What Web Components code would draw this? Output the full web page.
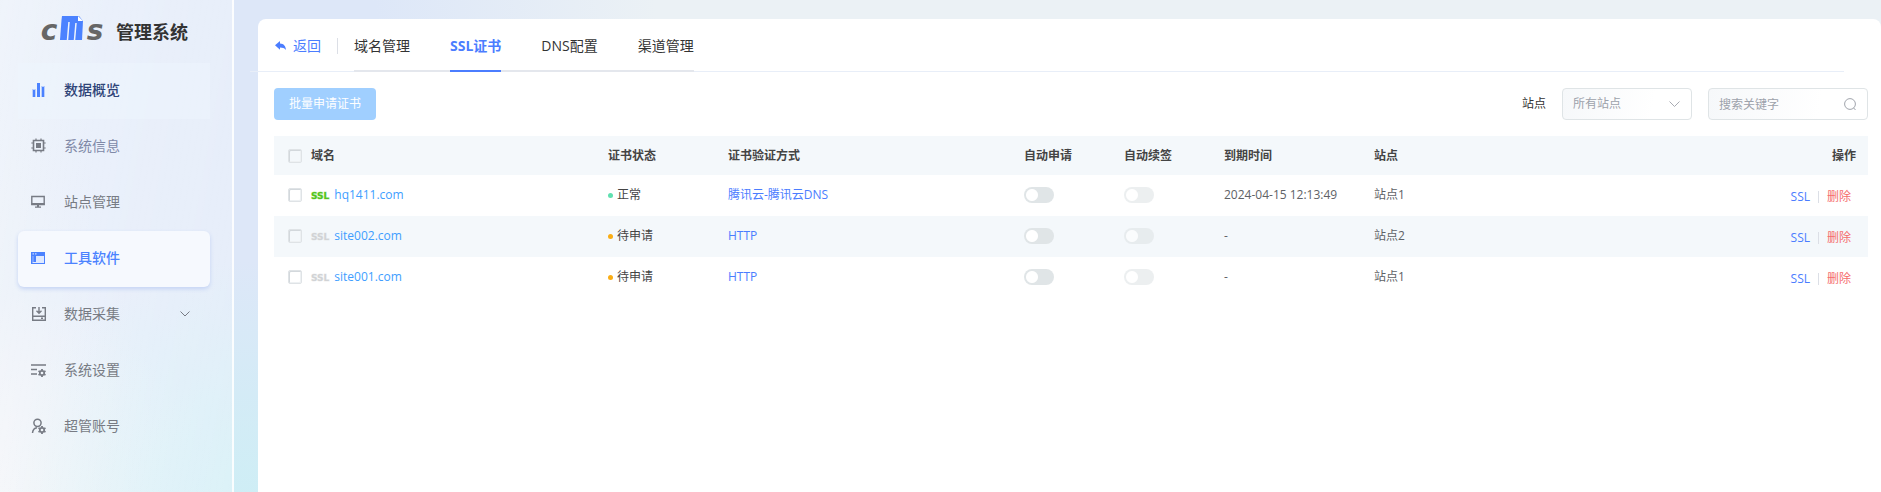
<!DOCTYPE html>
<html lang="zh-CN">
<head>
<meta charset="utf-8">
<title>CMS 管理系统 - SSL证书</title>
<style>
html { height: 100%; }
body {
  margin: 0; min-height: 100%; display: flex;
  font: 12px/20px "Open Sans", "Noto Sans CJK SC", sans-serif; color: #333;
  background:
    radial-gradient(circle 260px at 250px 520px, #cdeef5 0, #cdeef5aa 40%, #cdeef500 100%),
    radial-gradient(circle 200px at 0 492px, #f0f1f6 0, #f0f1f600 100%),
    radial-gradient(ellipse 420px 800px at 240px 120px, #dde7f8 0, #dde7f8 35%, #dde7f800 100%),
    #ebf1f5;
}
</style>
</head>
<body>
<cms-sidebar>
  <cms-menu-item icon="chart" tone="dark">数据概览</cms-menu-item>
  <cms-menu-item icon="chip" tone="soft">系统信息</cms-menu-item>
  <cms-menu-item icon="monitor">站点管理</cms-menu-item>
  <cms-menu-item icon="window" tone="active">工具软件</cms-menu-item>
  <cms-menu-item icon="collect" expandable>数据采集</cms-menu-item>
  <cms-menu-item icon="settings">系统设置</cms-menu-item>
  <cms-menu-item icon="admin">超管账号</cms-menu-item>
</cms-sidebar>
<cms-card>
  <cms-tabs slot="head">
    <cms-tab>域名管理</cms-tab>
    <cms-tab active>SSL证书</cms-tab>
    <cms-tab>DNS配置</cms-tab>
    <cms-tab>渠道管理</cms-tab>
  </cms-tabs>
  <cms-toolbar></cms-toolbar>
  <cms-cert-table></cms-cert-table>
</cms-card>

<script>
const define = (name, html, setup) => customElements.define(name, class extends HTMLElement {
  constructor() {
    super();
    this.attachShadow({ mode: 'open' });
  }
  connectedCallback() {
    this.shadowRoot.innerHTML = typeof html === 'function' ? html(this) : html;
    if (setup) setup(this);
  }
});

const gear = (x, y) => `<g transform="translate(${x} ${y})" fill="none" stroke="currentColor"><circle r="2.2" stroke-width="1.7"/><path d="M0-2.6V-4M0 2.6V4M2.2-1.3 3.5-2M-2.2-1.3-3.5-2M2.2 1.3 3.5 2M-2.2 1.3-3.5 2" stroke-width="1.8"/></g>`;
const icons = {
  chart: `<path fill="#b9cffc" d="M1 7h4v8H1zM10 4h4v11h-4z"/><path d="M2 8h2v7H2zM6 1h3v14H6zM11 5h2v10h-2z" fill="currentColor"/>`,
  chip: `<path fill="none" stroke="currentColor" stroke-width="1.6" d="M2.500 2.500h10v10h-10z"/><path fill="currentColor" d="M5 5h5v5H5z"/><path stroke="currentColor" stroke-width="1.200" d="M5 .5V2M10 .5V2M5 13v1.500M10 13v1.500M.3 5H2M.3 10H2M13 5h1.700M13 10h1.700"/>`,
  monitor: `<path fill="none" stroke="currentColor" stroke-width="1.400" d="M.8 2.500h12.400v8H.8z"/><path fill="currentColor" d="M.5 9h13v2H.5zM6 11h2v2H6zM4 12.500h6v1.200H4z"/>`,
  window: `<path fill="currentColor" d="M0 2h14v12H0z"/><path fill="#dfe9ff" d="M5 6h8v7H1.500v-1H5z"/><path fill="#9dbbff" d="M1.500 6h1v6h-1z"/><path fill="#c9daff" d="M1.500 3.200H3v1.200H1.500zM4 3.200h1.500v1.200H4z"/>`,
  collect: `<path fill="none" stroke="currentColor" stroke-width="1.400" d="M5 1.700H1.700v12.600h12.600V1.700H11M1.700 10.300h12.600M8 1v6M5.500 4.800 8 7.200l2.500-2.400M10 12.300h2"/>`,
  settings: `<path stroke="currentColor" stroke-width="1.600" d="M0 3h15M0 7.500h6M0 12h6"/>${gear(11, 11)}`,
  admin: `<g fill="none" stroke="currentColor" stroke-width="1.500"><circle cx="6.500" cy="4.800" r="3.600"/><path d="M1.500 15c.3-3 1.800-5 4.500-5.300"/></g>${gear(11, 12)}`
};

define('cms-logo', `
<style>
:host { display: flex; align-items: center; justify-content: center; height: 63px; padding-right: 4px; gap: 12px; }
.mark { display: flex; align-items: flex-end; height: 24px; margin-bottom: 7px;
  font: italic bold 28px/14px "DejaVu Sans", sans-serif; color: #666; }
.mark span { height: 14px; display: flex; align-items: center; padding-bottom: 5px; box-sizing: border-box; width: 18px; justify-content: center; }
svg { display: block; margin: 0 2px; }
b { font-size: 18px; line-height: 26px; }
</style>
<div class="mark"><span>c</span><svg width="24" height="24" viewBox="0 0 24 24" aria-hidden="true"><path fill="#4b82ff" d="M2 0h17l4 5-1 19H0L1.500 4z"/><path fill="#fff" d="M18 0v5h5z"/><path stroke="#edf3fd" stroke-width="1.500" d="M9 6 7.500 24M16 7l-1.500 17"/></svg><span>s</span></div>
<b>管理系统</b>`);

define('cms-sidebar', `
<style>
:host { display: block; flex: 0 0 232px; border-right: 2px solid #fffc; background: linear-gradient(100deg, #ffffff75, #ffffff42); }
nav { margin: 0 22px 0 18px; }
</style>
<cms-logo></cms-logo><nav aria-label="主菜单"><slot></slot></nav>`);

define('cms-menu-item', el => `
<style>
:host { display: block; color: #777b84; }
:host([tone=dark]) { color: #2f4478; background: #edf5fe80; }
:host([tone=soft]) { color: #8089a8; }
:host([tone=active]) { color: #4b82ff; background: #f6f9fe; border-radius: 6px; box-shadow: 0 2px 4px #c4d3f4; }
a { display: flex; align-items: center; height: 56px; padding: 0 20px 2px 13px; box-sizing: border-box; color: inherit; text-decoration: none; font-size: 14px; }
:host([tone=dark]) a, :host([tone=active]) a { font-weight: 500; }
.icon { width: 16px; height: 16px; margin-right: 17px; }
:host([tone=dark]) .icon { color: #4b82ff; }
:host([tone=soft]) .icon { color: #777b84; }
.text { flex: 1; }
</style>
<a href="#"><svg class="icon" viewBox="0 0 16 16" aria-hidden="true">${icons[el.getAttribute('icon')]}</svg><span class="text"><slot></slot></span>${el.hasAttribute('expandable') ? '<svg width="10" height="6" viewBox="0 0 10 6" aria-hidden="true"><path d="M.5.5 5 5 9.500.5" fill="none" stroke="currentColor"/></svg>' : ''}</a>`);

define('cms-card', `
<style>
:host { display: block; flex: 1; min-width: 0; margin: 19px 0 0 24px; background: #fff; border-radius: 8px 8px 0 0; box-sizing: border-box; padding: 0 13px 0 16px; }
header { margin: 0 24px 16px -24px; padding-left: 25px; border-bottom: 1px solid #e8eef8; display: flex; align-items: center; height: 52px; }
a { display: flex; align-items: center; gap: 7px; color: #4b7dff; font-size: 14px; text-decoration: none; padding-top: 2px; }
i { width: 1px; height: 16px; background: #dcdfe6; margin: 2px 16px 0; }
</style>
<header><a href="#"><svg width="11" height="10" viewBox="0 0 11 10" aria-hidden="true"><path fill="currentColor" d="M0 4.300 5 0v2.400c3.800.2 5.800 2.600 6 6.600-1.600-2-3.300-2.600-6-2.600v2.400z"/></svg>返回</a><i></i><slot name="head"></slot></header>
<slot></slot>`);

define('cms-tabs', `
<style>
:host { display: block; align-self: flex-start; }
div { display: flex; gap: 40px; height: 53px; box-sizing: border-box; border-bottom: 2px solid #e4e7ed; }
</style><div role="tablist"><slot></slot></div>`);

define('cms-tab', el => `
<style>
:host { display: block; height: 53px; }
button { font: inherit; font-size: 14px; line-height: 20px; color: #333; background: none; border: 0; border-bottom: 2px solid transparent; padding: 2px 0 0; height: 53px; display: block; }
:host([active]) button { color: #4b7dff; font-weight: 700; border-color: #4b7dff; }
</style><button role="tab" aria-selected="${el.hasAttribute('active')}"><slot></slot></button>`);

define('cms-toolbar', `
<style>
:host { display: flex; align-items: center; height: 32px; margin-bottom: 16px; }
button { width: 102px; height: 32px; border: 0; border-radius: 4px; background: #a0cfff; color: #fff; font: inherit; padding: 0; }
label { margin-left: auto; }
.field { position: relative; margin-left: 16px; height: 32px; }
select, input { display: block; box-sizing: border-box; height: 32px; border: 1px solid #dfe4e6; border-radius: 4px; background: linear-gradient(100deg, #f6f8fa, #fff 70%); padding: 0 30px 0 10px; font: inherit; color: #9da2ab; appearance: none; outline: 0; }
select { width: 130px; opacity: 1; }
input { width: 160px; }
input::placeholder { color: #9da2ab; }
svg { position: absolute; right: 12px; top: 10px; pointer-events: none; }
</style>
<button type="button" disabled>批量申请证书</button>
<label for="site">站点</label>
<div class="field"><select id="site"><option>所有站点</option></select><svg width="11" height="12" viewBox="0 0 11 12" aria-hidden="true"><path d="M.5 3.500l5 5 5-5" fill="none" stroke="#a8abb2"/></svg></div>
<div class="field"><input type="text" placeholder="搜索关键字" aria-label="搜索关键字"><svg width="12" height="13" viewBox="0 0 12 13" aria-hidden="true"><circle cx="6" cy="6" r="5.400" fill="none" stroke="#a0a4ac"/><path d="M9.500 9.800 11.500 12" stroke="#a0a4ac"/></svg></div>`);

define('cms-switch', el => `
<style>
:host { display: block; height: 16px; }
input { appearance: none; display: block; margin: 0; width: 30px; height: 16px; border-radius: 8px; background: radial-gradient(circle at 8px 8px, #fff 5.500px, #fff0 6.500px) #e0e5e7; }
input:disabled { opacity: .6; }
</style><input type="checkbox" role="switch" aria-label="${el.getAttribute('label')}" ${el.hasAttribute('disabled') ? 'disabled' : ''}>`);

define('cms-check', el => `
<style>
:host { display: block; height: 14px; }
input { appearance: none; display: block; margin: 0; width: 14px; height: 14px; box-sizing: border-box; border: 1px solid #dfe3e6; border-radius: 2px; box-shadow: inset 1px 1px 0 #d3d8dc, inset -1px -1px 0 #eef1f3; }
</style><input type="checkbox" aria-label="${el.getAttribute('label')}">`);

const certs = [
  { domain: 'hq1411.com', state: '正常', ok: true, verify: '腾讯云-腾讯云DNS', expires: '2024-04-15 12:13:49', site: '站点1' },
  { domain: 'site002.com', state: '待申请', verify: 'HTTP', expires: '-', site: '站点2' },
  { domain: 'site001.com', state: '待申请', verify: 'HTTP', expires: '-', site: '站点1' }
];
define('cms-cert-table', () => `
<style>
:host { display: block; }
table { width: 100%; border-collapse: collapse; table-layout: fixed; }
th, td { padding: 0; height: 41px; text-align: left; color: #606266; vertical-align: middle; }
td { padding-bottom: 1px; height: 40px; }
th { height: 39px; color: #444; font-weight: 700; }
thead tr, tbody tr:nth-child(even) { background: #f4f8fb; }
th:first-child, td:first-child { padding-left: 14px; }
th:last-child { text-align: right; padding-right: 12px; }
td:last-child { padding-right: 17px; }
a { color: #4b7dff; text-decoration: none; }
.domain, .state, .ops { display: flex; align-items: center; }
.domain { gap: 5px; }
.domain a { color: #409eff; }
.domain b { font: bold 9px/10px "DejaVu Sans", sans-serif; color: #d0d2d4; padding-top: 2px; -webkit-text-stroke: 1px #d6d8da60; }
.ok .domain b { color: #52c41a; -webkit-text-stroke-color: #52c41a60; }
.state { gap: 4px; color: #444; }
.state i { width: 5px; height: 5px; border-radius: 50%; background: #faad14; }
.ok .state i { background: #5fe0b0; }
.ops { justify-content: flex-end; gap: 8px; padding-top: 4px; }
.ops i { width: 1px; height: 12px; background: #dcdfe6; }
.ops .del { color: #f56c6c; }
</style>
<table>
<colgroup><col width="37"><col width="297"><col width="120"><col width="296"><col width="100"><col width="100"><col width="150"><col width="150"><col></colgroup>
<thead><tr><th><cms-check label="全选"></cms-check></th><th>域名</th><th>证书状态</th><th>证书验证方式</th><th>自动申请</th><th>自动续签</th><th>到期时间</th><th>站点</th><th>操作</th></tr></thead>
<tbody>${certs.map(c => `<tr class="${c.ok ? 'ok' : ''}">
<td><cms-check label="选择 ${c.domain}"></cms-check></td>
<td><div class="domain"><b>SSL</b><a href="#">${c.domain}</a></div></td>
<td><div class="state"><i></i>${c.state}</div></td>
<td><a href="#">${c.verify}</a></td>
<td><cms-switch label="自动申请"></cms-switch></td>
<td><cms-switch label="自动续签" disabled></cms-switch></td>
<td>${c.expires}</td><td>${c.site}</td>
<td><div class="ops"><a href="#">SSL</a><i></i><a class="del" href="#">删除</a></div></td></tr>`).join('')}</tbody>
</table>`);
</script>
</body>
</html></script>
